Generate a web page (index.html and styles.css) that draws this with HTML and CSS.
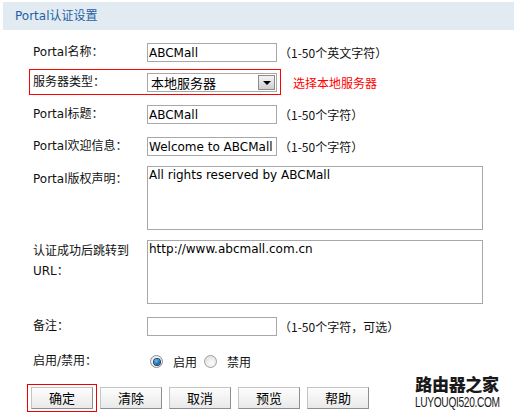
FILE: index.html
```html
<!DOCTYPE html>
<html lang="zh-CN">
<head>
  <meta charset="UTF-8" />
  <title>Portal认证设置</title>
  <link rel="stylesheet" href="styles.css">
</head>
<body>
  <div class="page">
    <div class="title">Portal认证设置</div>

    <div class="form">
      <div class="row first">
        <label class="lbl">Portal名称：</label>
        <input class="txt" type="text" value="ABCMall" />
        <span class="hint">（1-50个英文字符）</span>
      </div>

      <div class="row sel-row">
        <div class="mark">
          <label class="lbl">服务器类型：</label>
          <div class="select">
            <span>本地服务器</span>
            <span class="arrow"></span>
          </div>
        </div>
        <span class="note">选择本地服务器</span>
      </div>

      <div class="row">
        <label class="lbl">Portal标题：</label>
        <input class="txt" type="text" value="ABCMall" />
        <span class="hint">（1-50个字符）</span>
      </div>

      <div class="row wide">
        <label class="lbl">Portal欢迎信息：</label>
        <input class="txt" type="text" value="Welcome to ABCMall" />
        <span class="hint">（1-50个字符）</span>
      </div>

      <div class="row area">
        <label class="lbl lbl-top">Portal版权声明：</label>
        <textarea class="ta">All rights reserved by ABCMall</textarea>
      </div>

      <div class="row area">
        <label class="lbl lbl-url">认证成功后跳转到<br>URL：</label>
        <textarea class="ta">http://www.abcmall.com.cn</textarea>
      </div>

      <div class="row wide">
        <label class="lbl">备注：</label>
        <input class="txt" type="text" value="" />
        <span class="hint">（1-50个字符，可选）</span>
      </div>

      <div class="row radios">
        <label class="lbl">启用/禁用：</label>
        <span class="radio on"></span><span class="opt">启用</span>
        <span class="radio"></span><span class="opt">禁用</span>
      </div>

      <div class="btns">
        <div class="mark-btn"><button class="btn">确定</button></div>
        <button class="btn">清除</button>
        <button class="btn">取消</button>
        <button class="btn">预览</button>
        <button class="btn">帮助</button>
        <div class="logo">
          <div class="logo-cn">路由器之家</div>
          <div class="logo-en"><span>LUYOUQI520.COM</span></div>
        </div>
      </div>
    </div>
  </div>
</body>
</html>
```

FILE: styles.css
```css
body {
  margin: 0;
  font-family: "DejaVu Sans", "Noto Sans CJK SC", sans-serif;
  font-size: 12px;
  color: #111;
  background: #fff;
}
.page {
  padding: 2px 3px 0;
}
.title {
  height: 28px;
  line-height: 29px;
  padding-left: 12px;
  background: #e3ebf2;
  color: #1f5fa3;
}
.form {
  padding-left: 30px;
}
.row {
  display: flex;
  align-items: center;
  margin-top: 10px;
}
.row.first {
  margin-top: 13px;
}
.row.sel-row {
  margin-top: 7px;
}
.row.wide {
  margin-top: 13px;
}
.row.radios {
  margin-top: 16px;
}
.row.area {
  align-items: flex-start;
}
.lbl {
  width: 114px;
  flex: none;
  line-height: 19px;
}
.lbl-top {
  padding-top: 3px;
  line-height: 20px;
}
.lbl-url {
  padding-top: 1px;
  line-height: 20px;
}
.txt {
  box-sizing: border-box;
  width: 130px;
  height: 19px;
  margin: 0;
  padding: 0 1px;
  border: 1px solid #a8a8a8;
  font-family: "DejaVu Sans", sans-serif;
  font-size: 12px;
  color: #000;
  outline: none;
}
.hint {
  margin-left: 2px;
  font-family: "Noto Sans CJK SC", "DejaVu Sans", sans-serif;
}
.hint, .note, .opt {
  line-height: 19px;
}
.mark {
  display: flex;
  align-items: center;
  margin-left: -4px;
  padding: 3px 3px 2px;
  border: 1px solid #f00;
}
.select {
  box-sizing: border-box;
  width: 130px;
  height: 19px;
  display: flex;
  align-items: center;
  justify-content: space-between;
  padding: 0 1px 0 3px;
  border: 1px solid #a8a8a8;
  font-family: "Noto Sans CJK SC", sans-serif;
  font-size: 13px;
  color: #000;
}
.arrow {
  box-sizing: border-box;
  width: 17px;
  height: 15px;
  display: flex;
  align-items: center;
  justify-content: center;
  border: 1px solid #8c8c8c;
  background: linear-gradient(#f4f4f4, #cfcfcf);
}
.arrow::after {
  content: "";
  border-left: 4px solid transparent;
  border-right: 4px solid transparent;
  border-top: 4px solid #000;
}
.note {
  margin-left: 12px;
  color: #f00;
  font-family: "Noto Sans CJK SC", sans-serif;
}
.ta {
  box-sizing: border-box;
  width: 336px;
  height: 64px;
  margin: 0;
  padding: 0 1px;
  border: 1px solid #a8a8a8;
  font-family: "DejaVu Sans", sans-serif;
  font-size: 12px;
  line-height: 16px;
  color: #000;
  resize: none;
  overflow: hidden;
  outline: none;
}
.radio {
  box-sizing: border-box;
  width: 13px;
  height: 13px;
  margin-left: 3px;
  display: flex;
  align-items: center;
  justify-content: center;
  border: 1px solid #a0a0a0;
  border-radius: 50%;
  background: radial-gradient(circle at 60% 65%, #fdfdfd, #d8d8d8);
}
.radio.on {
  border-color: #8e8e8e;
  background: radial-gradient(circle, #fff, #e6e6e6);
}
.radio.on::after {
  content: "";
  width: 6px;
  height: 6px;
  border-radius: 50%;
  background: radial-gradient(circle at 40% 35%, #6cc0f0, #0c5b9c 70%);
  box-shadow: 0 0 0 1px #15446e;
}
.opt {
  margin: 0 4px 0 10px;
  font-family: "Noto Sans CJK SC", sans-serif;
}
.btns {
  display: flex;
  align-items: center;
  gap: 7px;
  margin-top: 13px;
  margin-left: -6px;
  padding-right: 14px;
}
.mark-btn {
  padding: 2px 3px;
  border: 1px solid #e00;
  margin-right: -4px;
}
.btn {
  box-sizing: border-box;
  width: 62px;
  height: 22px;
  margin: 0;
  padding: 0;
  border: 1px solid;
  border-color: #c4c4c4 #8e8e8e #8e8e8e #c4c4c4;
  background: linear-gradient(#fdfdfd, #e9e9e9);
  font-family: "Noto Sans CJK SC", sans-serif;
  font-size: 13px;
  line-height: 20px;
  color: #000;
}
.logo {
  align-self: flex-start;
  margin: -10px 0 0 auto;
  width: 86px;
  text-align: center;
  color: #1a1a1a;
}
.logo-cn {
  font-family: "Noto Sans CJK SC", sans-serif;
  font-weight: 900;
  font-size: 17px;
  line-height: 19px;
  letter-spacing: -0.3px;
  white-space: nowrap;
}
.logo-en {
  height: 13px;
  margin-top: 2px;
  display: flex;
  justify-content: center;
}
.logo-en span {
  font-family: "Liberation Sans", sans-serif;
  font-size: 15px;
  line-height: 13px;
  letter-spacing: -0.5px;
  white-space: nowrap;
  transform: scaleX(0.68);
}
```
